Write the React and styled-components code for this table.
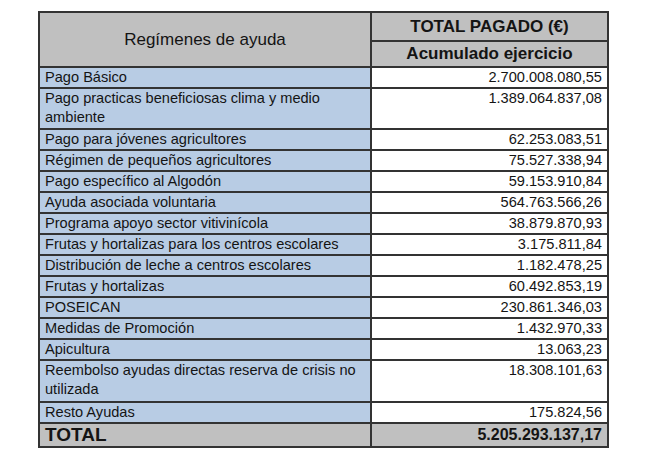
import React from "react";
import styled, { createGlobalStyle } from "styled-components";

const Global = createGlobalStyle`
  html, body { margin: 0; padding: 0; background: #ffffff; }
  body { font-family: "Liberation Sans", Arial, sans-serif; color: #141414; }
`;

const Page = styled.div`
  width: 650px;
  height: 458px;
  padding: 11px 0 0 38px;
  box-sizing: border-box;
`;

const Table = styled.table`
  width: 569px;
  border-collapse: collapse;
  table-layout: fixed;
  border: 2px solid #333;
  font-size: 14.6px;
  line-height: 19px;
`;

const HeadCell = styled.th`
  background: #c0c0c0;
  border: 2px solid #333;
  font-weight: ${(p) => (p.$bold ? 700 : 400)};
  font-size: 17px;
  padding: 0;
  text-align: center;
  vertical-align: middle;
  line-height: ${(p) => p.$lh || 20}px;
`;

const Row = styled.tr`
  height: ${(p) => p.$h}px;
`;

const NameCell = styled.td`
  background: #b8cce4;
  border: 2px solid #333;
  padding: 0 4px 0 5px;
  vertical-align: top;
`;

const ValueCell = styled.td`
  background: #ffffff;
  border: 2px solid #333;
  padding: 0 5px 0 4px;
  text-align: right;
  vertical-align: top;
`;

const TotalCell = styled.td`
  background: #c0c0c0;
  border: 2px solid #333;
  padding: ${(p) => (p.$right ? "0 5px 0 4px" : "0 4px 0 5px")};
  text-align: ${(p) => (p.$right ? "right" : "left")};
  font-weight: 700;
  font-size: ${(p) => (p.$right ? 16 : 19)}px;
  line-height: 22px;
`;

const rows = [
  ["Pago Básico", "2.700.008.080,55", 21],
  ["Pago practicas beneficiosas clima y medio ambiente", "1.389.064.837,08", 41],
  ["Pago para jóvenes agricultores", "62.253.083,51", 21],
  ["Régimen de pequeños agricultores", "75.527.338,94", 21],
  ["Pago específico al Algodón", "59.153.910,84", 21],
  ["Ayuda asociada voluntaria", "564.763.566,26", 21],
  ["Programa apoyo sector vitivinícola", "38.879.870,93", 21],
  ["Frutas y hortalizas para los centros escolares", "3.175.811,84", 21],
  ["Distribución de leche a centros escolares", "1.182.478,25", 21],
  ["Frutas y hortalizas", "60.492.853,19", 21],
  ["POSEICAN", "230.861.346,03", 21],
  ["Medidas de Promoción", "1.432.970,33", 21],
  ["Apicultura", "13.063,23", 21],
  ["Reembolso ayudas directas reserva de crisis no utilizada", "18.308.101,63", 42],
  ["Resto Ayudas", "175.824,56", 20],
];

export default function App() {
  return (
    <>
      <Global />
      <Page>
        <Table>
          <colgroup>
            <col style={{ width: 332 }} />
            <col style={{ width: 237 }} />
          </colgroup>
          <thead>
            <tr>
              <HeadCell rowSpan={2}>Regímenes de ayuda</HeadCell>
              <HeadCell $bold $lh={27}>TOTAL PAGADO (€)</HeadCell>
            </tr>
            <tr>
              <HeadCell $bold $lh={24}>Acumulado ejercicio</HeadCell>
            </tr>
          </thead>
          <tbody>
            {rows.map(([name, value, h]) => (
              <Row key={name} $h={h}>
                <NameCell>{name}</NameCell>
                <ValueCell>{value}</ValueCell>
              </Row>
            ))}
            <Row $h={24}>
              <TotalCell>TOTAL</TotalCell>
              <TotalCell $right>5.205.293.137,17</TotalCell>
            </Row>
          </tbody>
        </Table>
      </Page>
    </>
  );
}
